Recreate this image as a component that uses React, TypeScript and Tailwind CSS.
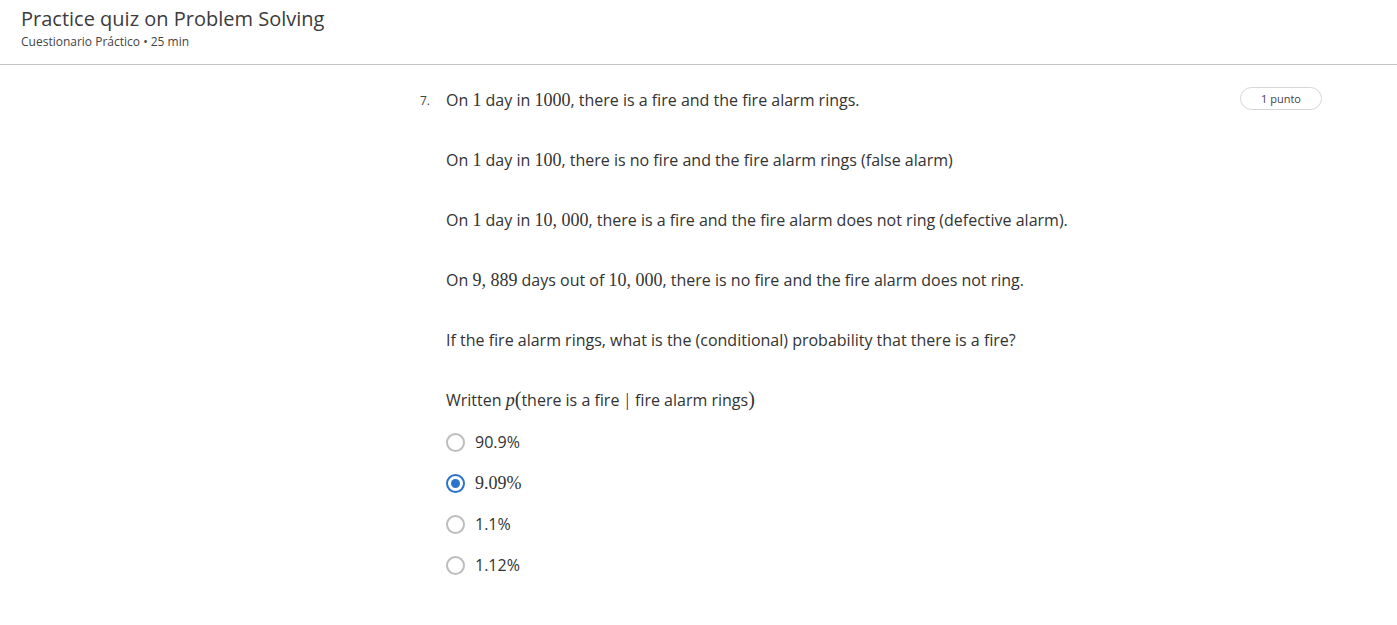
import { useState } from 'react'

const M = ({ children }: { children: React.ReactNode }) => (
  <span className="text-[18px] leading-none" style={{ fontFamily: '"Liberation Serif", "DejaVu Serif", serif' }}>
    {children}
  </span>
)

const Paren = ({ children }: { children: React.ReactNode }) => (
  <span className="text-[20px] leading-none" style={{ fontFamily: '"Liberation Serif", "DejaVu Serif", serif' }}>
    {children}
  </span>
)

export default function App() {
  const [selected, setSelected] = useState(1)

  const options: React.ReactNode[] = [
    '90.9%',
    <M key="m">9.09%</M>,
    '1.1%',
    '1.12%',
  ]

  return (
    <div className="min-h-screen bg-white text-[#333]" style={{ fontFamily: '"Open Sans", sans-serif' }}>
      {/* Header */}
      <div className="px-[21px] pt-[5px] pb-[14px] border-b border-[#c4c4c4]">
        <h1 className="text-[20px] leading-[27px] text-[#3c3c3c]">Practice quiz on Problem Solving</h1>
        <p className="text-[12px] leading-[17px] text-[#444] mt-[1px]">Cuestionario Práctico • 25 min</p>
      </div>

      {/* Question */}
      <div className="flex pl-[420px] pr-[75px] pt-[24px]">
        <div className="w-[26px] text-[12px] leading-[22px] pt-[1px] text-[#444]">7.</div>
        <div className="flex-1 text-[16px] text-[#333]">
          <div className="flex flex-col gap-[38px]">
            <p className="leading-[22px]">On <M>1</M> day in <M>1000</M>, there is a fire and the fire alarm rings.</p>
            <p className="leading-[22px]">On <M>1</M> day in <M>100</M>, there is no fire and the fire alarm rings (false alarm)</p>
            <p className="leading-[22px]">On <M>1</M> day in <M>10, 000</M>, there is a fire and the fire alarm does not ring (defective alarm).</p>
            <p className="leading-[22px]">On <M>9, 889</M> days out of <M>10, 000</M>, there is no fire and the fire alarm does not ring.</p>
            <p className="leading-[22px]">If the fire alarm rings, what is the (conditional) probability that there is a fire?</p>
            <p className="leading-[22px]">
              Written <M><i>p</i></M><Paren>(</Paren>there is a fire<span className="mx-[6px]"><M>|</M></span>fire alarm rings<Paren>)</Paren>
            </p>
          </div>
          <div className="flex flex-col gap-[19px] mt-[20px]">
            {options.map((o, i) => (
              <label key={i} className="flex items-center gap-[10px] cursor-pointer h-[22px]" onClick={() => setSelected(i)}>
                {selected === i ? (
                  <span className="w-[19px] h-[19px] rounded-full border-2 border-[#2a73cc] flex items-center justify-center">
                    <span className="w-[9px] h-[9px] rounded-full bg-[#2a73cc]" />
                  </span>
                ) : (
                  <span className="w-[19px] h-[19px] rounded-full border-2 border-[#bdbdbd]" />
                )}
                <span className="text-[16px]">{o}</span>
              </label>
            ))}
          </div>
        </div>
        <div>
          <span className="block -mt-[2px] px-[20px] py-[3px] rounded-full border border-[#d6d6d6] text-[11px] leading-[15px] text-[#444]">1 punto</span>
        </div>
      </div>
    </div>
  )
}
